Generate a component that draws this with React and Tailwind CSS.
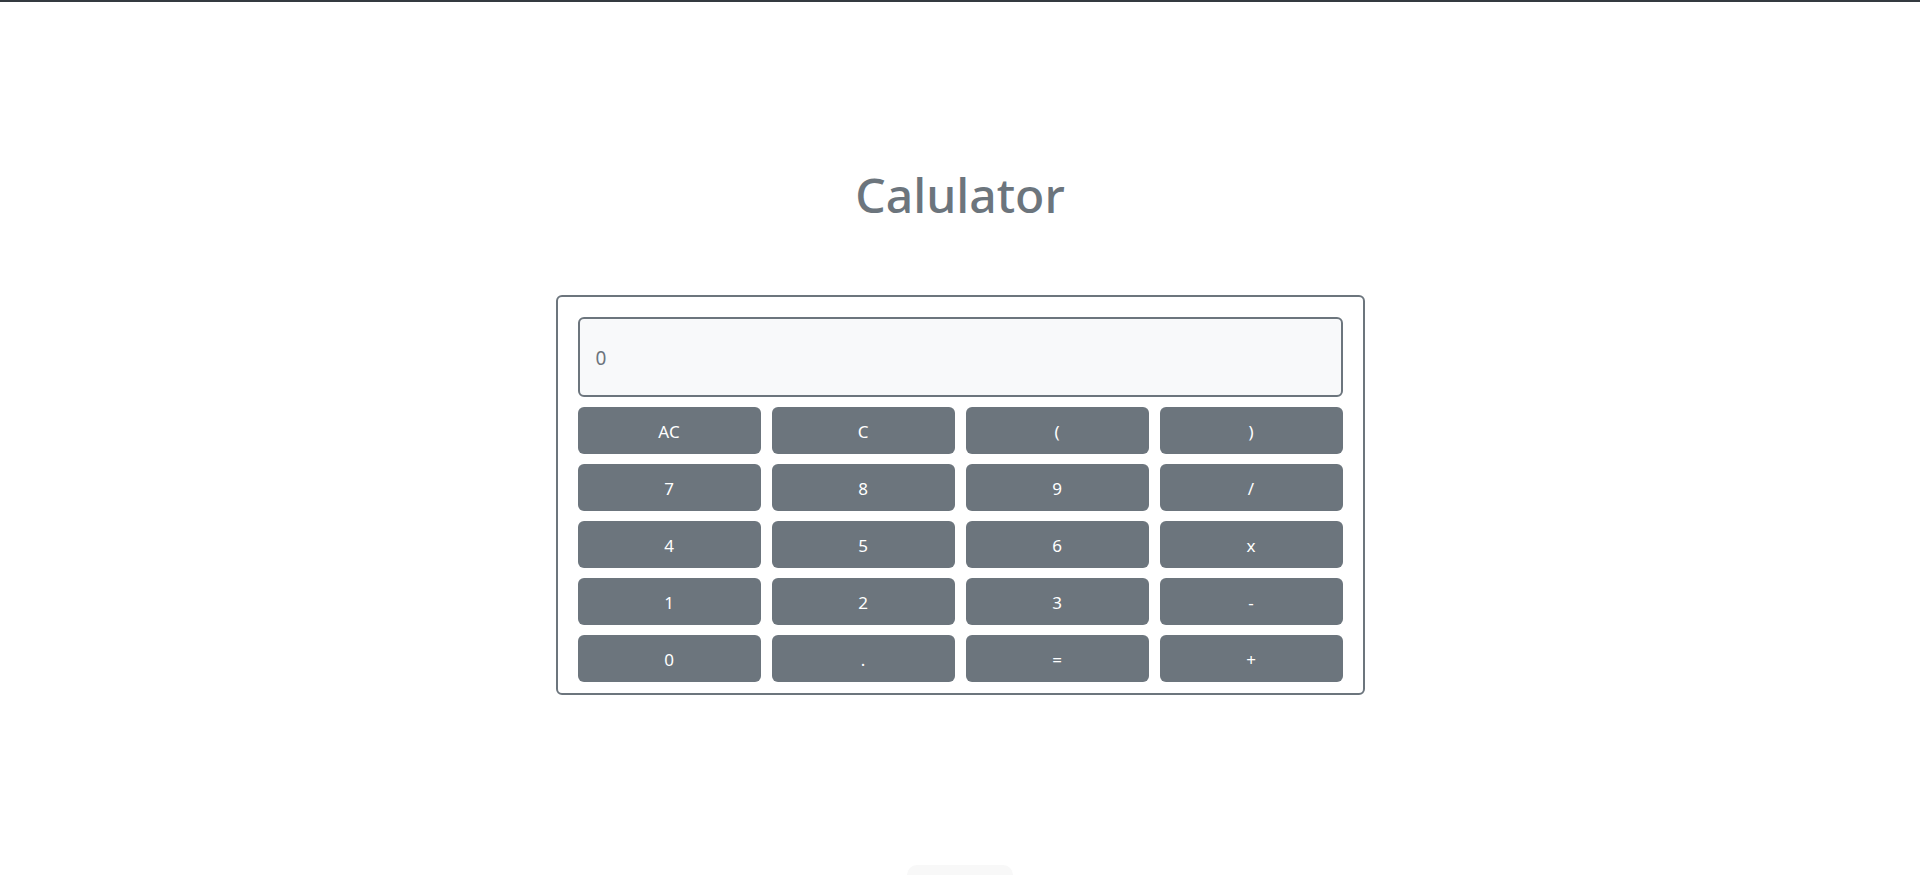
import React from "react";

const keys = ["AC", "C", "(", ")", "7", "8", "9", "/", "4", "5", "6", "x", "1", "2", "3", "-", "0", ".", "=", "+"];

export default function App() {
  return (
    <div
      className="h-screen flex flex-col bg-white border-t-2 border-[#343a40] overflow-hidden"
      style={{ fontFamily: '"Noto Sans", "Open Sans", sans-serif' }}
    >
      <h1 className="mt-[165px] text-center text-[48px] leading-[56px] font-medium text-[#6c757d]">
        Calulator
      </h1>
      <div className="mt-[72px] mx-auto w-[809px] border-2 border-[#6c757d] rounded-[6px] px-5 pt-5 pb-[11px]">
        <div className="h-[80px] border-2 border-[#6c757d] rounded-[6px] bg-[#f8f9fa] flex items-center pl-4 pt-[3px] text-[19px] text-[#6c757d]">
          0
        </div>
        <div className="mt-[10px] grid grid-cols-4 gap-x-[11px] gap-y-[10px]">
          {keys.map((k) => (
            <button
              key={k}
              className="h-[47px] rounded-[6px] bg-[#6c757d] text-white text-[17px] flex items-center justify-center pt-[2px]"
            >
              {k}
            </button>
          ))}
        </div>
      </div>
      <div className="mt-auto mx-auto w-[106px] h-[10px] rounded-t-full bg-[#f8f8f8]"></div>
    </div>
  );
}
